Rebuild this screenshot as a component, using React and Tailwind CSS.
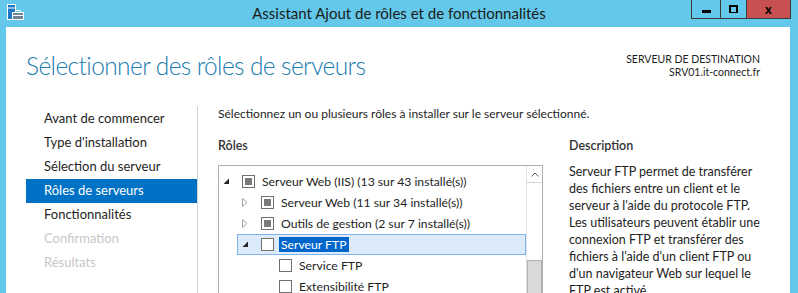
import React from 'react';

const font = { fontFamily: 'Lato, "Open Sans", sans-serif' };

function AppIcon() {
  return (
    <svg width="18" height="17" viewBox="0 0 18 17">
      <rect x="0.5" y="0.5" width="8" height="15" fill="#1e78c8" stroke="#ffffff" />
      <line x1="1" y1="4" x2="8" y2="4" stroke="#ffffff" />
      <rect x="5.5" y="8.5" width="11" height="7" fill="#6e8597" stroke="#ffffff" />
      <rect x="9" y="6.5" width="4" height="2" fill="none" stroke="#ffffff" />
      <line x1="6" y1="11.5" x2="16" y2="11.5" stroke="#ffffff" />
    </svg>
  );
}

function Triangle({ filled }) {
  if (filled) {
    return (
      <svg width="7" height="7" viewBox="0 0 7 7">
        <path d="M6 0.5 L6 6 L0.5 6 Z" fill="#262626" />
      </svg>
    );
  }
  return (
    <svg width="6" height="9" viewBox="0 0 6 9">
      <path d="M0.5 0.5 L5 4.5 L0.5 8.5 Z" fill="none" stroke="#a6a6a6" />
    </svg>
  );
}

function Check({ partial }) {
  return (
    <div className="w-[13px] h-[13px] border border-[#707070] bg-white flex items-center justify-center shrink-0">
      {partial && <div className="w-[7px] h-[7px] bg-[#7a7a7a]" />}
    </div>
  );
}

function Row({ indent, arrow, partial, label, selected }) {
  return (
    <div
      className={`h-[21px] flex items-center border ${selected ? 'bg-[#dcebfc] border-[#7eb4ea]' : 'border-transparent'}`}
      style={{ marginLeft: indent - 1 }}
    >
      <div className="w-[23px] flex items-center pl-[4px]">
        {arrow === 'open' && <Triangle filled />}
        {arrow === 'closed' && <Triangle />}
      </div>
      <Check partial={partial} />
      <span
        className={`ml-[5px] px-[2px] text-[12.2px] leading-[15px] ${selected ? 'bg-[#0066cc] text-white' : 'text-[#1e1e1e]'}`}
      >
        {label}
      </span>
    </div>
  );
}

const nav = [
  { label: 'Avant de commencer' },
  { label: "Type d'installation" },
  { label: 'Sélection du serveur' },
  { label: 'Rôles de serveurs', active: true },
  { label: 'Fonctionnalités' },
  { label: 'Confirmation', disabled: true },
  { label: 'Résultats', disabled: true },
];

export default function App() {
  return (
    <div className="w-[798px] h-[293px] bg-[#63c8e9] flex flex-col overflow-hidden" style={font}>
      {/* Title bar */}
      <div className="h-[27px] flex items-start shrink-0">
        <div className="w-[107px] pl-[7px] pt-[4px]">
          <AppIcon />
        </div>
        <div className="flex-1 text-center pt-[4px] text-[15px] leading-[19px] text-[#1b1b1b]">
          Assistant Ajout de rôles et de fonctionnalités
        </div>
        <div className="w-[107px] pr-[7px]">
          <div className="flex h-[19px] border border-t-0 border-[#3a3a3a]">
            <div className="w-[29px] flex items-center justify-center border-r border-[#3a3a3a]">
              <div className="w-[9px] h-[3px] bg-black mt-[4px]" />
            </div>
            <div className="w-[26px] flex items-center justify-center border-r border-[#3a3a3a]">
              <div className="w-[9px] h-[8px] border-2 border-black border-b-[1.5px]" />
            </div>
            <div className="flex-1 bg-[#c75050] flex items-center justify-center text-[13px] font-bold text-black leading-none">
              x
            </div>
          </div>
        </div>
      </div>

      {/* Body */}
      <div className="flex-1 ml-[6px] mr-[8px] bg-white flex flex-col overflow-hidden">
        <div className="flex items-start justify-between h-[79px] shrink-0">
          <h1 className="pl-[20px] pt-[23px] text-[24.5px] leading-[32px] tracking-[-0.6px] font-light text-[#1a7cb0]">
            Sélectionner des rôles de serveurs
          </h1>
          <div className="pr-[30px] pt-[26px] text-right text-[10.5px] leading-[13px] text-[#1e1e1e]">
            <div>SERVEUR DE DESTINATION</div>
            <div>SRV01.it-connect.fr</div>
          </div>
        </div>

        <div className="flex flex-1 min-h-0">
          {/* Nav */}
          <div className="w-[192px] shrink-0 pl-[20px] pt-[1px] border-r border-[#d4d4d4]">
            {nav.map((n) => (
              <div
                key={n.label}
                className={`h-[24px] pl-[18px] flex items-center text-[13px] ${
                  n.active ? 'bg-[#0072c6] text-white' : n.disabled ? 'text-[#c8c8c8]' : 'text-[#1e1e1e]'
                }`}
              >
                {n.label}
              </div>
            ))}
          </div>

          {/* Content */}
          <div className="flex-1 pl-[20px] text-[#1e1e1e]">
            <div className="text-[12px] leading-[16px]">
              Sélectionnez un ou plusieurs rôles à installer sur le serveur sélectionné.
            </div>
            <div className="flex mt-[16px]">
              <div className="w-[325px] shrink-0">
                <div className="text-[12.5px] leading-[16px] font-semibold text-[#333]">Rôles</div>
                <div className="mt-[11px] h-[140px] border border-[#abadb3] border-b-0 flex">
                  <div className="flex-1 pt-[5px]">
                    <Row indent={0} arrow="open" partial label="Serveur Web (IIS) (13 sur 43 installé(s))" />
                    <Row indent={19} arrow="closed" partial label="Serveur Web (11 sur 34 installé(s))" />
                    <Row indent={19} arrow="closed" partial label="Outils de gestion (2 sur 7 installé(s))" />
                    <Row indent={19} arrow="open" label="Serveur FTP" selected />
                    <Row indent={37} label="Service FTP" />
                    <Row indent={37} label="Extensibilité FTP" />
                  </div>
                  <div className="w-[16px] border-l border-[#e0e0e0] flex flex-col">
                    <div className="h-[17px] border-b border-[#d4d4d4] flex items-center justify-center">
                      <svg width="8" height="5" viewBox="0 0 8 5">
                        <path d="M0.5 4.5 L4 1 L7.5 4.5" fill="none" stroke="#606060" />
                      </svg>
                    </div>
                    <div className="h-[77px]" />
                    <div className="flex-1 bg-[#d9d9d9] border border-[#b0b0b0] border-b-0" />
                  </div>
                </div>
              </div>
              <div className="pl-[26px] w-[220px]">
                <div className="text-[12.5px] leading-[16px] font-semibold text-[#333]">Description</div>
                <div className="mt-[9px] text-[12.5px] leading-[17px]">
                  Serveur FTP permet de transférer des fichiers entre un client et le serveur à l'aide du protocole FTP. Les utilisateurs peuvent établir une connexion FTP et transférer des fichiers à l'aide d'un client FTP ou d'un navigateur Web sur lequel le FTP est activé.
                </div>
              </div>
            </div>
          </div>
        </div>
      </div>
    </div>
  );
}
